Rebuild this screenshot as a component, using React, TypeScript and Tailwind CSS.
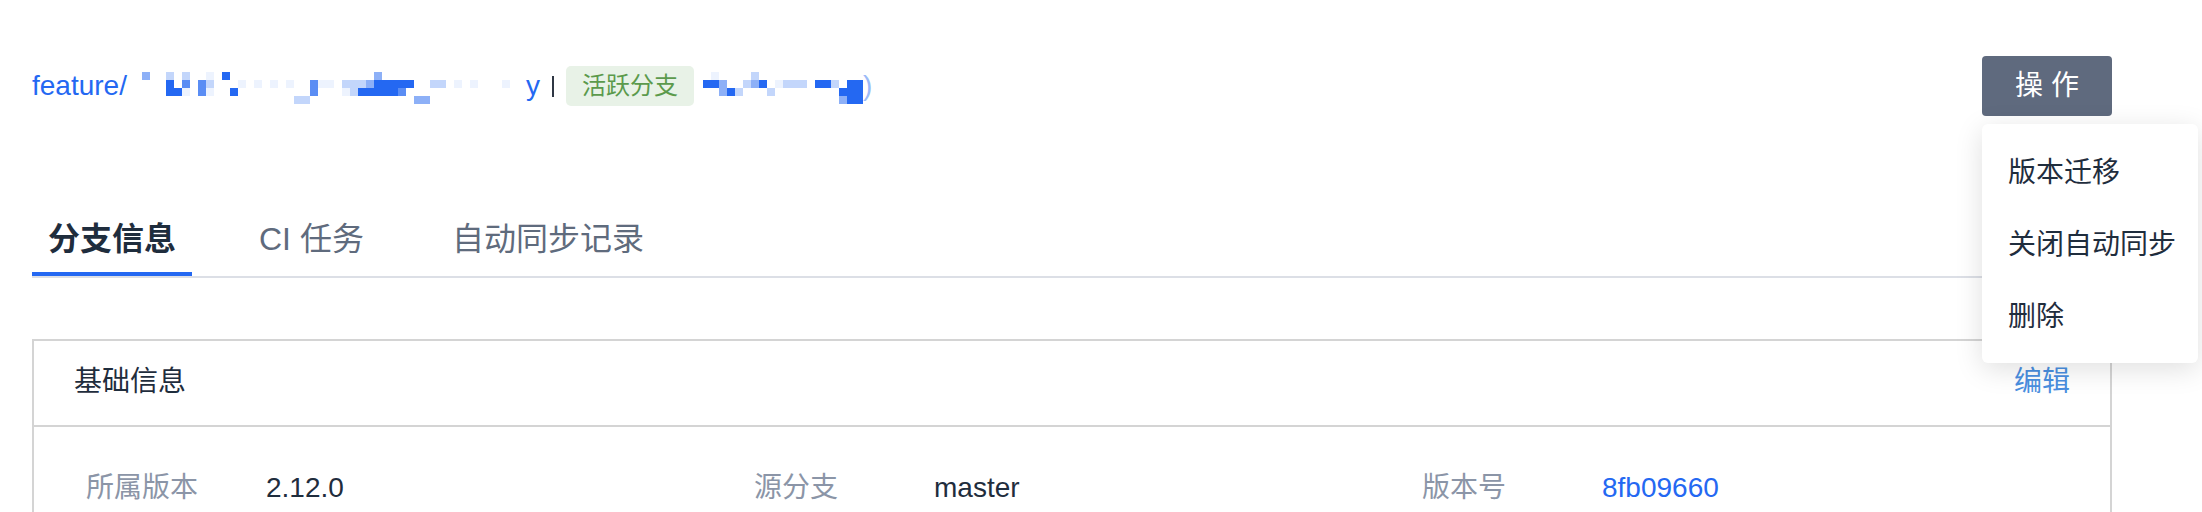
import React from "react";

type Cell = [number, number, string];

const C: Record<string, string> = {
  p: "#edf3fe",
  l: "#c3d6fb",
  m: "#8db0f7",
  M: "#5a8df4",
  S: "#2468f2",
};

const mosaic1: Cell[] = [
  [1, 0, "m"], [4, 0, "l"], [6, 0, "l"], [9, 0, "p"], [11, 0, "S"], [30, 0, "m"],
  [4, 1, "S"], [6, 1, "M"], [8, 1, "M"], [9, 1, "l"], [13, 1, "p"], [15, 1, "p"], [17, 1, "p"], [19, 1, "p"],
  [22, 1, "M"], [23, 1, "p"], [24, 1, "p"], [26, 1, "l"], [27, 1, "l"], [28, 1, "l"], [29, 1, "m"],
  [30, 1, "S"], [31, 1, "S"], [32, 1, "S"], [33, 1, "S"], [34, 1, "S"], [37, 1, "l"], [38, 1, "l"],
  [40, 1, "p"], [42, 1, "p"], [46, 1, "p"],
  [4, 2, "S"], [5, 2, "S"], [6, 2, "p"], [8, 2, "M"], [9, 2, "p"], [12, 2, "S"], [22, 2, "M"],
  [26, 2, "p"], [27, 2, "l"], [28, 2, "S"], [29, 2, "S"], [30, 2, "S"], [31, 2, "S"], [32, 2, "S"], [33, 2, "M"],
  [20, 3, "l"], [21, 3, "l"], [35, 3, "m"], [36, 3, "m"],
];

const mosaic2: Cell[] = [
  [1, 0, "p"], [6, 0, "l"],
  [0, 1, "S"], [1, 1, "S"], [2, 1, "m"], [5, 1, "l"], [6, 1, "m"], [7, 1, "S"], [9, 1, "p"],
  [10, 1, "l"], [11, 1, "l"], [12, 1, "l"], [14, 1, "S"], [15, 1, "S"], [16, 1, "l"], [18, 1, "S"], [19, 1, "S"],
  [2, 2, "m"], [3, 2, "S"], [4, 2, "l"], [8, 2, "l"], [17, 2, "S"], [18, 2, "S"], [19, 2, "S"],
  [17, 3, "m"], [18, 3, "S"], [19, 3, "S"],
];

function Mosaic({ cells, cols, className }: { cells: Cell[]; cols: number; className?: string }) {
  return (
    <svg width={cols * 8} height={32} viewBox={`0 0 ${cols * 8} 32`} className={className}>
      {cells.map(([k, r, c], i) => (
        <rect key={i} x={k * 8} y={r * 8} width={8} height={8} fill={C[c]} />
      ))}
    </svg>
  );
}

export default function App() {
  return (
    <div className="w-[2202px] h-[512px] bg-white overflow-hidden font-['Liberation_Sans','Noto_Sans_CJK_SC',sans-serif] text-[#1f2d3d]">
      {/* header */}
      <div className="flex items-center justify-between pl-[32px] pr-[90px] pt-[56px]">
        <div className="flex items-center h-[60px] text-[28px] text-[#2468f2]">
          <span className="leading-[40px]">feature/</span>
          <Mosaic cells={mosaic1} cols={49} className="ml-[7px] mt-[4px]" />
          <span className="leading-[40px]">y</span>
          <span className="ml-[12px] w-[2px] h-[21px] bg-[#2f3744]" />
          <span className="ml-[12px] flex items-center justify-center w-[128px] h-[40px] rounded-[5px] bg-[#e8f2e7] text-[24px] text-[#5b9a4c]">
            活跃分支
          </span>
          <Mosaic cells={mosaic2} cols={20} className="ml-[9px] mt-[4px]" />
          <span className="leading-[40px] text-[#9bbaf8]">)</span>
        </div>
        <div className="relative z-10">
          <button className="w-[130px] h-[60px] rounded-[4px] bg-[#5f6a7e] text-white text-[28px] leading-none">
            操 作
          </button>
          <div className="absolute left-0 top-[68px] w-[216px] rounded-[6px] bg-white pt-[13px] pb-[10px] shadow-[0_6px_28px_rgba(0,0,0,0.13)]">
            {["版本迁移", "关闭自动同步", "删除"].map((t) => (
              <div key={t} className="h-[72px] flex items-center pl-[26px] text-[28px] text-[#1f2d3d]">
                {t}
              </div>
            ))}
          </div>
        </div>
      </div>

      {/* tabs */}
      <div className="mx-[32px] w-[2080px] mt-[90px] flex items-end border-b-2 border-[#dcdfe6]">
        <div className="w-[160px] h-[70px] flex items-center justify-center border-b-4 border-[#2468f2] text-[32px] font-semibold text-[#1f2d3d]">
          分支信息
        </div>
        <div className="ml-[67px] h-[70px] pb-[4px] flex items-center text-[32px] text-[#5f6b7d]">CI 任务</div>
        <div className="ml-[88px] h-[70px] pb-[4px] flex items-center text-[32px] text-[#5f6b7d]">自动同步记录</div>
      </div>

      {/* card */}
      <div className="mx-[32px] w-[2080px] mt-[61px] border-2 border-[#d4d4d4]">
        <div className="h-[86px] flex items-center justify-between px-[40px] border-b-2 border-[#d4d4d4] pb-[2px]">
          <span className="text-[28px] text-[#1f2d3d]">基础信息</span>
          <span className="text-[28px] text-[#4a8fe0]">编辑</span>
        </div>
        <div className="pl-[52px] pt-[41px] pb-[120px] grid grid-cols-[668px_668px_668px] gap-y-[40px]">
          {[
            ["所属版本", "2.12.0", false],
            ["源分支", "master", false],
            ["版本号", "8fb09660", true],
          ].map(([l, v, link]) => (
            <div key={l as string} className="flex items-center h-[40px] text-[28px]">
              <span className="w-[180px] text-[#8b95a7]">{l}</span>
              <span className={link ? "text-[#2468f2]" : "text-[#1f2d3d]"}>{v}</span>
            </div>
          ))}
        </div>
      </div>
    </div>
  );
}
